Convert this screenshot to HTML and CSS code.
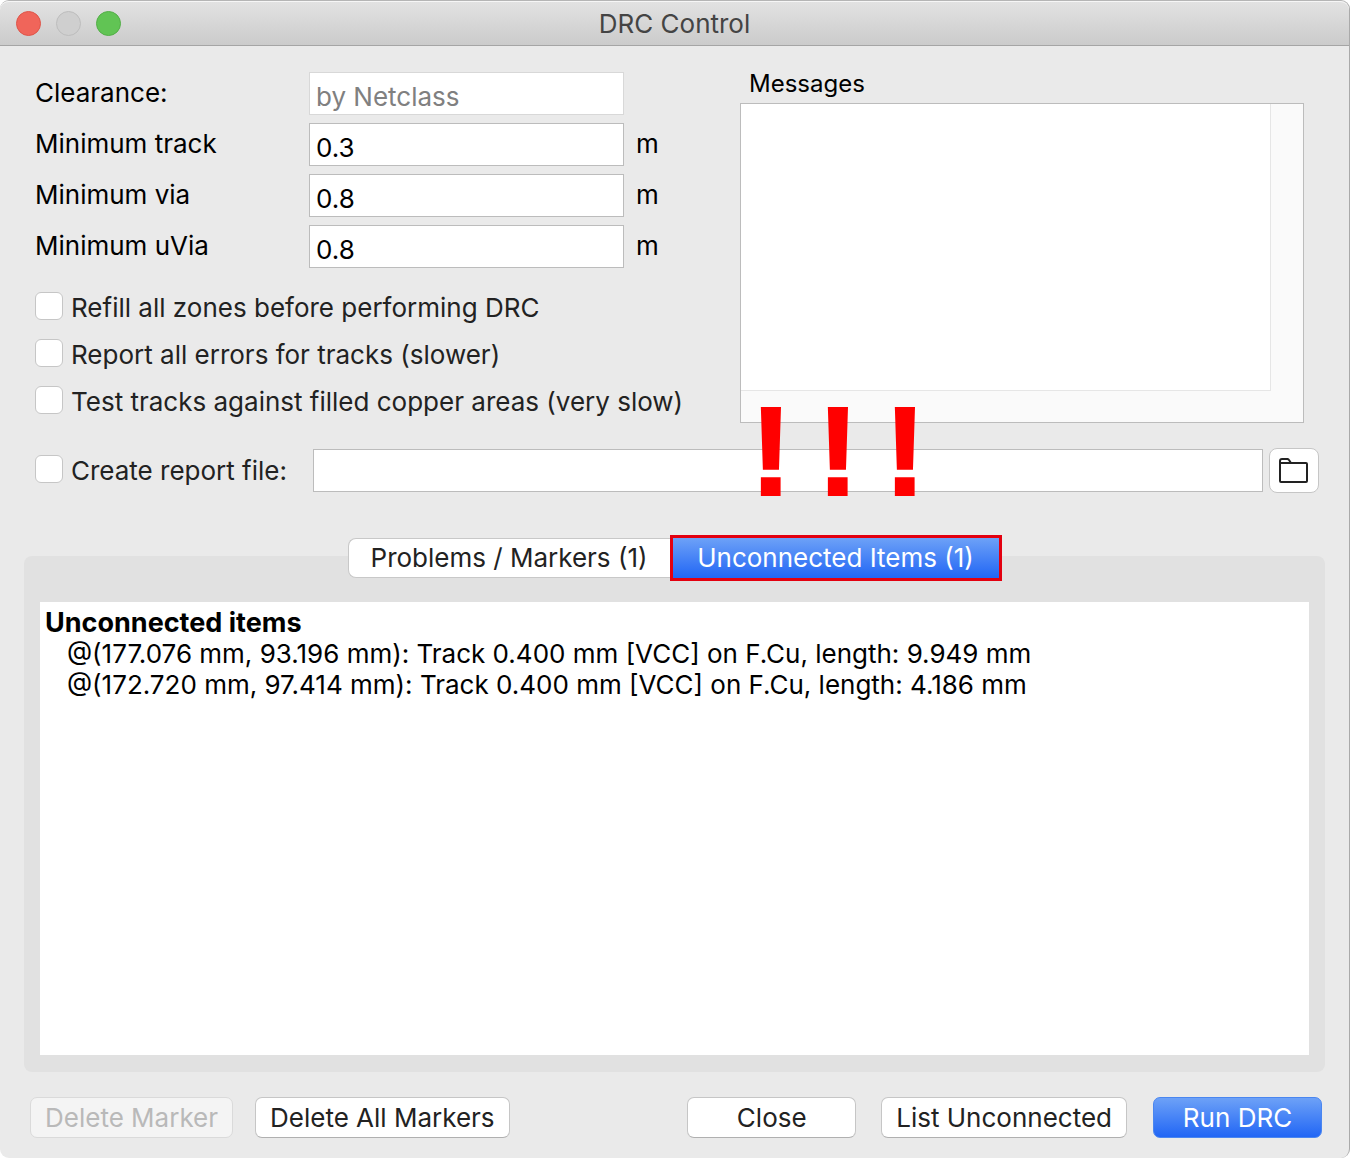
FILE: index.html
```html
<!DOCTYPE html>
<html lang="en">
<head>
    <meta charset="UTF-8">
    <meta name="viewport" content="width=device-width, initial-scale=1.0">
    <title>DRC Control</title>
    <link rel="stylesheet" href="styles.css">
</head>
<body>
    <div class="window">
        <header class="titlebar">
            <div class="lights">
                <button class="light red" aria-label="Close window"></button>
                <button class="light" aria-label="Minimize" disabled></button>
                <button class="light green" aria-label="Zoom"></button>
            </div>
            <h1>DRC Control</h1>
        </header>
        <main>
            <div class="top">
                <div class="settings">
                    <div class="fields">
                        <label for="clearance">Clearance:</label>
                        <input type="text" id="clearance" value="by Netclass" disabled>
                        <span></span>
                        <label for="track">Minimum track</label>
                        <input type="text" id="track" value="0.3">
                        <span>m</span>
                        <label for="via">Minimum via</label>
                        <input type="text" id="via" value="0.8">
                        <span>m</span>
                        <label for="uvia">Minimum uVia</label>
                        <input type="text" id="uvia" value="0.8">
                        <span>m</span>
                    </div>
                    <div class="options">
                        <label class="check"><input type="checkbox">Refill all zones before performing DRC</label>
                        <label class="check"><input type="checkbox">Report all errors for tracks (slower)</label>
                        <label class="check"><input type="checkbox">Test tracks against filled copper areas (very slow)</label>
                    </div>
                </div>
                <div class="messages">
                    <label for="messages">Messages</label>
                    <div class="message-box">
                        <textarea id="messages" readonly></textarea>
                    </div>
                </div>
            </div>
            <div class="report">
                <label class="check"><input type="checkbox">Create report file:</label>
                <input type="text" aria-label="Report file">
                <button class="browse" aria-label="Browse">
                    <svg width="30" height="26" viewBox="0 0 30 26" fill="none" stroke="#222" stroke-width="2" stroke-linejoin="round">
                        <path d="M1 6V3a2 2 0 0 1 2-2h5a2 2 0 0 1 2 1l2 3M1 5h26a1 1 0 0 1 1 1v17a1 1 0 0 1-1 1H2a1 1 0 0 1-1-1z"/>
                    </svg>
                </button>
                <div class="warning"><span>!</span><span>!</span><span>!</span></div>
            </div>
            <section class="panel">
                <div class="tabs">
                    <button class="tab">Problems / Markers (1)</button>
                    <button class="tab active">Unconnected Items (1)</button>
                </div>
                <div class="results">
                    <h2>Unconnected items</h2>
                    <ul>
                        <li>@(177.076 mm, 93.196 mm): Track 0.400 mm [VCC] on F.Cu, length: 9.949 mm</li>
                        <li>@(172.720 mm, 97.414 mm): Track 0.400 mm [VCC] on F.Cu, length: 4.186 mm</li>
                    </ul>
                </div>
            </section>
        </main>
        <footer>
            <button class="btn" disabled>Delete Marker</button>
            <button class="btn">Delete All Markers</button>
            <button class="btn close">Close</button>
            <button class="btn">List Unconnected</button>
            <button class="btn primary">Run DRC</button>
        </footer>
    </div>
</body>
</html>
```
FILE: styles.css
```css
* {
    box-sizing: border-box;
}
body {
    margin: 0;
    font-family: Inter, "Liberation Sans", sans-serif;
    font-size: 26px;
    line-height: 30px;
    color: #000;
    background: #fff;
}
input, button, textarea {
    font: inherit;
    color: inherit;
    margin: 0;
}
h1, h2, ul {
    margin: 0;
    padding: 0;
    font-size: 26px;
}
.window {
    display: flex;
    flex-direction: column;
    min-height: 100vh;
    background: #eaeaea;
    border-top: 1px solid #b5b5b5;
    border-right: 1px solid #aaa;
    border-radius: 9px;
}
.titlebar {
    position: relative;
    height: 45px;
    display: flex;
    align-items: center;
    justify-content: center;
    background: linear-gradient(#e2e2e2, #cbcbcb);
    border-top: 1px solid #f6f6f6;
    border-bottom: 1px solid #a5a5a5;
    border-radius: 9px 9px 0 0;
}
.titlebar h1 {
    font-weight: 400;
    color: #444;
}
.lights {
    position: absolute;
    left: 16px;
    display: flex;
    gap: 15px;
}
.light {
    width: 25px;
    height: 25px;
    padding: 0;
    border: 1px solid #bdbdbd;
    border-radius: 50%;
    background: #cfcfcf;
}
.light.red {
    background: #f0655a;
    border-color: #de5549;
}
.light.green {
    background: #61c454;
    border-color: #53ae47;
}
main {
    flex: 1;
    display: flex;
    flex-direction: column;
}
.top {
    display: grid;
    grid-template-columns: 5fr 4fr;
    padding: 26px 45px 0 35px;
}
.fields {
    display: grid;
    grid-template-columns: 262px 1fr 104px;
    column-gap: 12px;
    row-gap: 8px;
}
.fields label, .fields span {
    line-height: 41px;
}
input[type="text"] {
    width: 100%;
    min-width: 0;
    height: 43px;
    padding: 6px 6px 0;
    border: 1px solid #bcbcbc;
    border-radius: 0;
    background: #fff;
}
input[type="text"]:disabled {
    color: #808080;
    border-color: #d8d8d8;
}
.options {
    display: flex;
    flex-direction: column;
    gap: 15px;
    margin-top: 24px;
}
.check {
    display: flex;
    align-items: center;
    gap: 8px;
    white-space: nowrap;
    color: #222;
}
input[type="checkbox"] {
    appearance: none;
    flex: none;
    width: 28px;
    height: 28px;
    margin-bottom: 4px;
    background: #fff;
    border: 1px solid #c6c6c6;
    border-radius: 6px;
}
.messages {
    display: flex;
    flex-direction: column;
}
.messages label {
    padding: 0 9px;
    margin-top: -3px;
    height: 34px;
    font-size: 24px;
}
.message-box {
    height: 320px;
    padding: 0 32px 31px 0;
    border: 1px solid #bcbcbc;
    background: #fafafa;
}
textarea {
    display: block;
    width: 100%;
    height: 100%;
    resize: none;
    border: 0;
    border-right: 1px solid #e6e6e6;
    border-bottom: 1px solid #e6e6e6;
    outline: none;
    background: #fff;
}
.report {
    position: relative;
    display: flex;
    align-items: center;
    padding: 0 30px 0 35px;
    margin-top: 25px;
}
.report .check {
    flex: none;
    width: 278px;
}
.browse {
    flex: none;
    display: flex;
    align-items: center;
    justify-content: center;
    width: 50px;
    height: 45px;
    margin-left: 6px;
    padding: 0;
    background: #fff;
    border: 1px solid #c6c6c6;
    border-radius: 8px;
}
/* alert marks hang over the report row, above the active tab */
.warning {
    position: absolute;
    left: 750px;
    bottom: -3px;
    display: flex;
    gap: 25px;
    font: bold 126px/88px "Liberation Sans", sans-serif;
    color: #f00;
    -webkit-text-stroke: 2px #f00;
    pointer-events: none;
}
.panel {
    flex: 1;
    display: flex;
    flex-direction: column;
    margin: 63px 24px 0;
    padding: 0 16px 17px;
    background: #e1e1e1;
    border-radius: 8px;
}
.tabs {
    display: flex;
    justify-content: center;
    margin-top: -21px;
    margin-bottom: 21px;
}
.tab {
    width: 322px;
    height: 40px;
    margin: 3px 0;
    padding: 0;
    white-space: nowrap;
    color: #222;
    background: #fff;
    border: 1px solid #c8c8c8;
    border-right: 0;
    border-radius: 8px 0 0 8px;
}
.tab.active {
    width: 332px;
    height: 46px;
    margin: 0;
    color: #fff;
    background: linear-gradient(#6da1f7, #2166f5);
    border: 3px solid #e3000f;
    border-radius: 0;
}
.results {
    flex: 1;
    padding: 5px;
    line-height: 31px;
    background: #fff;
}
.results h2 {
    font-size: 27px;
    font-weight: 700;
}
.results ul {
    list-style: none;
    padding-left: 22px;
}
footer {
    display: flex;
    padding: 25px 27px 20px 30px;
}
.btn {
    height: 41px;
    margin-right: 22px;
    padding: 0 14px;
    white-space: nowrap;
    color: #222;
    background: #fff;
    border: 1px solid #c6c6c6;
    border-bottom-color: #b0b0b0;
    border-radius: 7px;
}
.btn:disabled {
    color: #b9b9b9;
    background: #f4f4f4;
    border-color: #dadada;
}
.btn.close {
    width: 169px;
    margin-left: auto;
    margin-right: 25px;
}
.btn.primary {
    width: 169px;
    margin: 0 0 0 4px;
    color: #fff;
    background: linear-gradient(#6da1f7, #2166f5);
    border-color: #4a86f0;
}
```
